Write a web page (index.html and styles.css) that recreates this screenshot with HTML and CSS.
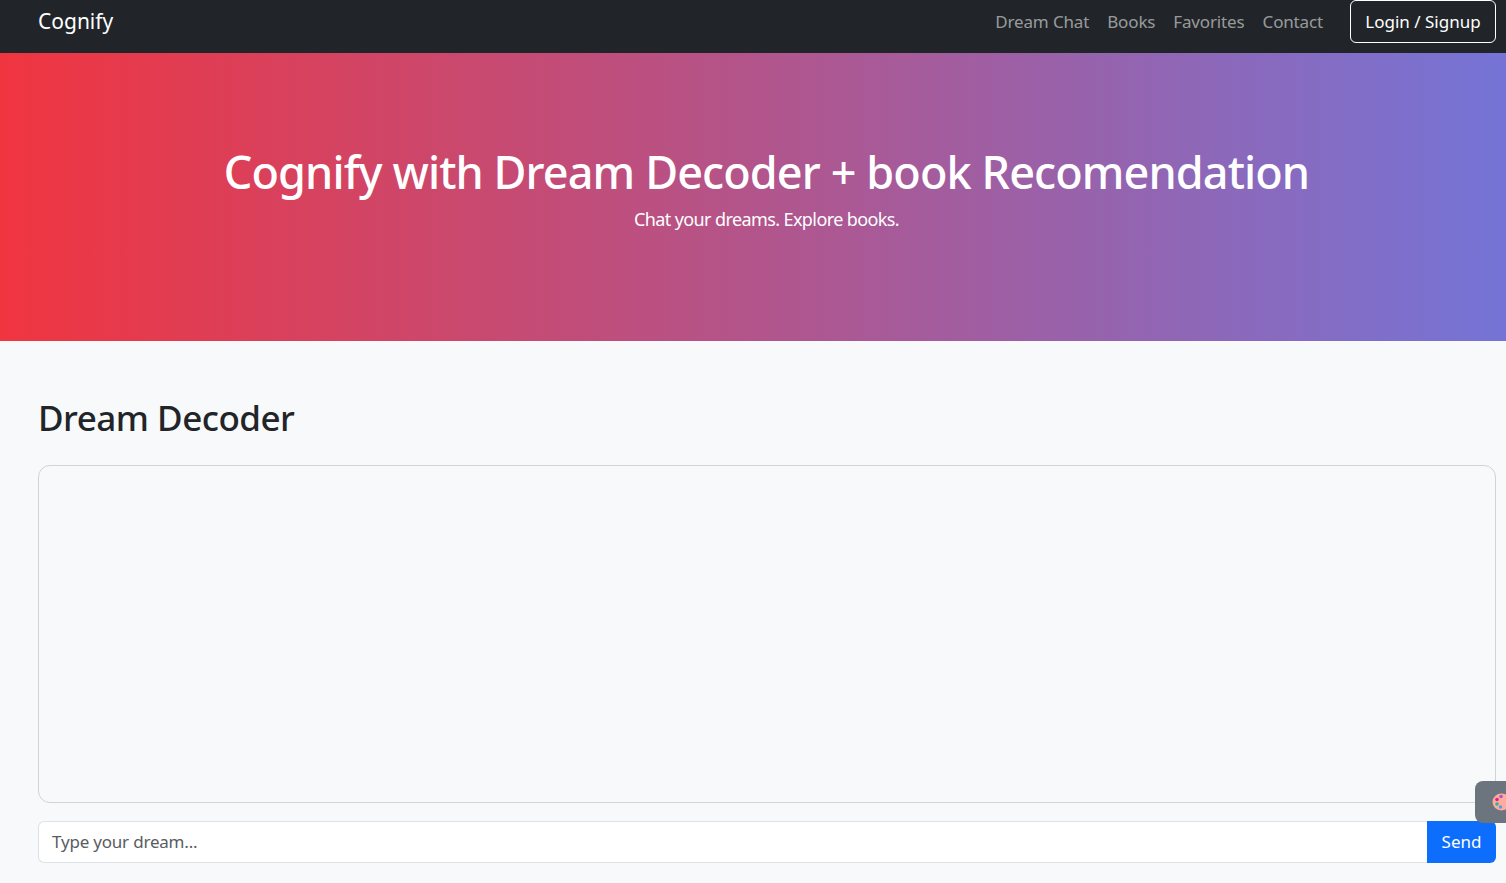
FILE: index.html
```html
<!DOCTYPE html>
<html lang="en">
<head>
<meta charset="utf-8">
<title>Cognify</title>
<link rel="stylesheet" href="styles.css">
</head>
<body>
<nav class="navbar">
  <a class="brand" href="#">Cognify</a>
  <div class="nav-links">
    <a class="nav-link" href="#">Dream Chat</a>
    <a class="nav-link" href="#">Books</a>
    <a class="nav-link" href="#">Favorites</a>
    <a class="nav-link" href="#">Contact</a>
    <button class="login">Login / Signup</button>
  </div>
</nav>
<header class="hero">
  <h1 class="hero-title">Cognify with Dream Decoder + book Recomendation</h1>
  <p class="hero-sub">Chat your dreams. Explore books.</p>
</header>
<main class="content">
  <h2 class="section-title">Dream Decoder</h2>
  <div class="chat-box"></div>
  <div class="input-group">
    <input class="chat-input" type="text" placeholder="Type your dream...">
    <button class="send">Send</button>
  </div>
</main>
<button class="theme-toggle" aria-label="Theme">
  <svg class="palette" viewBox="0 0 36 36" width="18" height="18">
    <ellipse cx="19" cy="18" rx="18" ry="17" fill="#ffac9c"/>
    <circle cx="10" cy="13" r="3.6" fill="#e0218a"/>
    <circle cx="18" cy="7" r="3.6" fill="#a855d8"/>
    <circle cx="10" cy="22" r="3.6" fill="#2bb5a0"/>
    <circle cx="17" cy="28" r="3.6" fill="#5b9bec"/>
  </svg>
</button>
</body>
</html>
```

FILE: styles.css
```css
* { box-sizing: border-box; }
html, body { height: 100%; }
body {
  margin: 0;
  background: #f8f9fa;
  color: #212529;
  font-family: "Noto Sans", "Open Sans", sans-serif;
  font-size: 17px;
  line-height: 1.5;
  overflow: hidden;
}
.navbar {
  height: 53px;
  background: #212529;
  display: flex;
  align-items: center;
  justify-content: space-between;
  padding: 0 10px 10px 38px;
}
.brand {
  color: #fff;
  font-size: 21px;
  text-decoration: none;
}
.nav-links { display: flex; align-items: center; }
.nav-link {
  color: rgba(255,255,255,.55);
  text-decoration: none;
  padding: 0 9px;
  letter-spacing: -0.15px;
}
.login {
  margin-left: 18px;
  height: 43px;
  width: 146px;
  padding: 0;
  background: transparent;
  color: #fff;
  border: 1px solid #fff;
  border-radius: 6px;
  font: inherit;
}
.hero {
  height: 288px;
  background: linear-gradient(90deg, #f03540, #7574d6);
  color: #fff;
  text-align: center;
  padding-top: 92px;
  padding-left: 27px;
}
.hero-title {
  margin: 0;
  font-size: 45px;
  font-weight: 500;
  line-height: 1.2;
  letter-spacing: -0.9px;
}
.hero-sub {
  margin: 7px 0 0;
  font-size: 18px;
  line-height: 27px;
  letter-spacing: -0.6px;
}
.content { padding: 56px 10px 0 38px; }
.section-title {
  margin: 0 0 26px;
  font-size: 35px;
  font-weight: 500;
  line-height: 1.2;
  letter-spacing: -0.5px;
}
.chat-box {
  height: 338px;
  border: 1px solid #ced4da;
  border-radius: 12px;
  margin-bottom: 18px;
}
.input-group { display: flex; height: 42px; }
.chat-input {
  flex: 1;
  min-width: 0;
  background: #fff;
  border: 1px solid #dee2e6;
  border-right: 0;
  border-radius: 6px 0 0 6px;
  padding: 0 13px;
  font: inherit;
  color: #212529;
  letter-spacing: -0.2px;
}
.chat-input::placeholder { color: #595c5f; opacity: 1; }
.send {
  width: 69px;
  background: #0d6efd;
  color: #fff;
  border: 0;
  border-radius: 0 6px 6px 0;
  font: inherit;
}
.theme-toggle {
  position: absolute;
  left: 1475px;
  top: 781px;
  width: 50px;
  height: 42px;
  padding: 0 0 0 17px;
  background: #6c757d;
  border: 0;
  border-radius: 8px;
  display: flex;
  align-items: center;
}
.palette { display: block; flex: none; }
```
